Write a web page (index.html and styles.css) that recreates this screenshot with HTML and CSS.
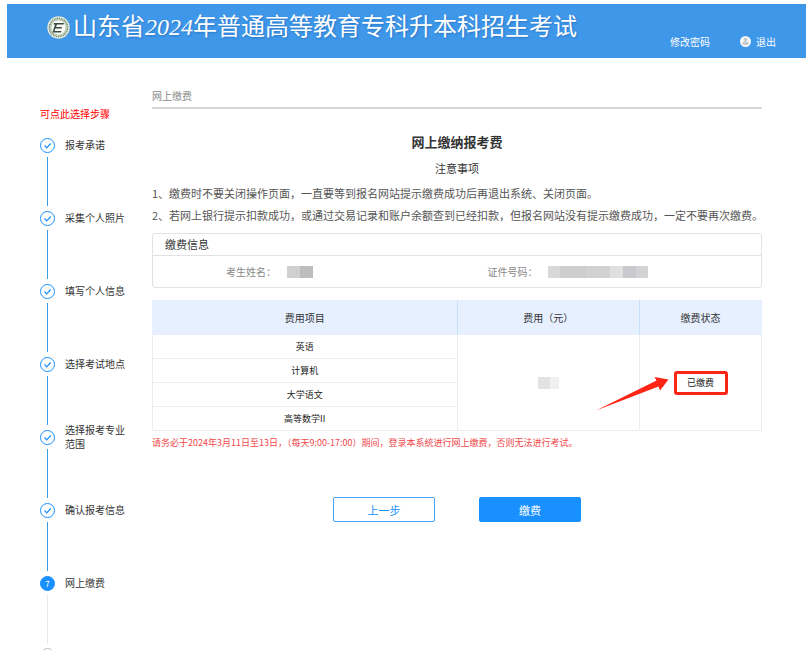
FILE: index.html
```
<!DOCTYPE html>
<html lang="zh-CN">
<head>
    <meta charset="UTF-8">
    <meta name="viewport" content="width=device-width, initial-scale=1.0">
    <title>网上缴费</title>
    <link rel="stylesheet" href="styles.css">
</head>
<body>
    <header class="header">
        <div class="brand">
            <svg class="logo" viewBox="0 0 46 46" aria-hidden="true">
                <circle cx="23" cy="23" r="22.5" fill="#c9d8c4"/>
                <circle cx="23" cy="23" r="20" fill="none" stroke="#f8faf3" stroke-width="3"/>
                <circle cx="23" cy="23" r="18.5" fill="none" stroke="#66806b" stroke-width="3" stroke-dasharray="2 1.5"/>
                <circle cx="23" cy="23" r="15" fill="#fbfbf5" stroke="#8fa48d" stroke-width="1"/>
                <path d="M17 14h17l-1 3H20l-2 5h12l-1 3H17l-2 5h14l-1 3H11l5-16h-3l1-3h3z" fill="#3b4a48"/>
            </svg>
            <span class="brand-name">山东省<em>2024</em>年普通高等教育专科升本科招生考试</span>
        </div>
        <nav class="user-nav">
            <a href="#">修改密码</a>
            <a href="#" class="logout">
                <svg class="user-icon" viewBox="0 0 22 22" aria-hidden="true">
                    <circle cx="11" cy="11" r="11" fill="#f4f5f6"/>
                    <circle cx="11" cy="7" r="3.5" fill="#c3c7cc"/>
                    <path d="M4.500 16c0-4 3-5 6.500-5s6.500 1 6.500 5c-4 2.500-9 2.500-13 0z" fill="#c3c7cc"/>
                </svg>
                退出
            </a>
        </nav>
    </header>

    <div class="main">
        <!-- Steps -->
        <aside class="sidebar">
            <p class="steps-tip">可点此选择步骤</p>
            <ol class="steps">
                <li class="step done">
                    <a href="#"><span class="step-icon"><svg viewBox="0 0 15 15"><path d="M4.500 7.500l2.200 2.300 4-4.300"/></svg></span><span class="step-label">报考承诺</span></a>
                </li>
                <li class="step done">
                    <a href="#"><span class="step-icon"><svg viewBox="0 0 15 15"><path d="M4.500 7.500l2.200 2.300 4-4.300"/></svg></span><span class="step-label">采集个人照片</span></a>
                </li>
                <li class="step done">
                    <a href="#"><span class="step-icon"><svg viewBox="0 0 15 15"><path d="M4.500 7.500l2.200 2.300 4-4.300"/></svg></span><span class="step-label">填写个人信息</span></a>
                </li>
                <li class="step done">
                    <a href="#"><span class="step-icon"><svg viewBox="0 0 15 15"><path d="M4.500 7.500l2.200 2.300 4-4.300"/></svg></span><span class="step-label">选择考试地点</span></a>
                </li>
                <li class="step done">
                    <a href="#"><span class="step-icon"><svg viewBox="0 0 15 15"><path d="M4.500 7.500l2.200 2.300 4-4.300"/></svg></span><span class="step-label">选择报考专业范围</span></a>
                </li>
                <li class="step done">
                    <a href="#"><span class="step-icon"><svg viewBox="0 0 15 15"><path d="M4.500 7.500l2.200 2.300 4-4.300"/></svg></span><span class="step-label">确认报考信息</span></a>
                </li>
                <li class="step current">
                    <a href="#"><span class="step-icon">7</span><span class="step-label">网上缴费</span></a>
                </li>
                <li class="step wait">
                    <span class="step-icon"></span>
                </li>
            </ol>
        </aside>

        <main class="content">
            <div class="crumb">网上缴费</div>

            <h1>网上缴纳报考费</h1>
            <h2>注意事项</h2>
            <div class="notice">
                <p>1、缴费时不要关闭操作页面，一直要等到报名网站提示缴费成功后再退出系统、关闭页面。</p>
                <p>2、若网上银行提示扣款成功，或通过交易记录和账户余额查到已经扣款，但报名网站没有提示缴费成功，一定不要再次缴费。</p>
            </div>

            <!-- Payment info -->
            <section class="panel">
                <h3>缴费信息</h3>
                <dl class="info">
                    <div class="info-item">
                        <dt>考生姓名：</dt>
                        <dd class="mask mask-name"></dd>
                    </div>
                    <div class="info-item">
                        <dt>证件号码：</dt>
                        <dd class="mask mask-id"></dd>
                    </div>
                </dl>
            </section>

            <table class="fees">
                <thead>
                    <tr>
                        <th class="col-item">费用项目</th>
                        <th class="col-fee">费用（元）</th>
                        <th class="col-status">缴费状态</th>
                    </tr>
                </thead>
                <tbody>
                    <tr>
                        <td>英语</td>
                        <td rowspan="4"><span class="mask mask-fee"></span></td>
                        <td rowspan="4">
                            <span class="status">
                                已缴费
                                <svg class="arrow" viewBox="0 0 73 34" aria-hidden="true">
                                    <path d="M0 33.500L60.500 3.500 58.500 0 72.500 2.500 64 13.500 62.500 9.500z" fill="#fe2416"/>
                                </svg>
                            </span>
                        </td>
                    </tr>
                    <tr><td>计算机</td></tr>
                    <tr><td>大学语文</td></tr>
                    <tr><td>高等数学II</td></tr>
                </tbody>
            </table>
            <p class="deadline">请务必于2024年3月11日至13日，（每天9:00-17:00）期间，登录本系统进行网上缴费，否则无法进行考试。</p>

            <div class="actions">
                <button type="button" class="btn">上一步</button>
                <button type="button" class="btn btn-primary">缴费</button>
            </div>
        </main>
    </div>
</body>
</html>
```
FILE: styles.css
```
* {
    box-sizing: border-box;
}
html,
body {
    height: 100%;
}
body {
    margin: 0;
    padding: 4px 0 0 7px;
    display: flex;
    flex-direction: column;
    overflow: hidden;
    background-color: #fff;
    color: #333;
    font-family: "Noto Sans CJK SC", sans-serif;
    font-size: 10px;
}
h1,
h2,
h3,
p,
dl,
dd,
ol {
    margin: 0;
    padding: 0;
}
a {
    color: inherit;
    text-decoration: none;
}

/* Header */
.header {
    display: flex;
    justify-content: space-between;
    flex-shrink: 0;
    height: 54px;
    padding: 0 30px 0 40px;
    background-color: #3e97e9;
    color: #fff;
}
.brand {
    display: flex;
    align-items: center;
    gap: 3px;
    height: 46px;
}
.logo {
    width: 23px;
    height: 23px;
}
.brand-name {
    font-family: "Liberation Serif", "Noto Sans CJK SC", serif;
    font-size: 24px;
    line-height: 30px;
    white-space: nowrap;
    text-shadow: 1px 1px 2px rgba(0, 50, 120, 0.3);
}
.user-nav {
    display: flex;
    align-items: center;
    align-self: flex-end;
    gap: 30px;
    height: 34px;
    white-space: nowrap;
}
.logout {
    display: flex;
    align-items: center;
    gap: 5px;
}
.user-icon {
    width: 11px;
    height: 11px;
}

.main {
    display: flex;
    flex: 1;
    min-height: 0;
    padding: 30px 44px 0 33px;
}

/* Steps */
.sidebar {
    width: 112px;
    flex-shrink: 0;
    padding-top: 18px;
}
.steps-tip {
    margin-bottom: 11px;
    color: #f00;
    line-height: 16px;
}
.steps {
    list-style: none;
}
.step a {
    display: flex;
    align-items: center;
    gap: 10px;
    height: 24px;
}
.step::after {
    content: "";
    display: block;
    width: 1px;
    height: 49px;
    margin-left: 7px;
    background-color: #3a9be0;
}
.step-icon {
    display: flex;
    align-items: center;
    justify-content: center;
    flex-shrink: 0;
    width: 15px;
    height: 15px;
    border: 1px solid #1890ff;
    border-radius: 50%;
    font-size: 8px;
}
.step-icon svg {
    width: 15px;
    height: 15px;
    flex-shrink: 0;
    fill: none;
    stroke: #1890ff;
    stroke-width: 1.2;
}
.step-label {
    width: 64px;
    line-height: 14px;
}
.current .step-icon {
    background-color: #1890ff;
    color: #fff;
}
.current::after {
    background-color: #e8e8e8;
}
.wait {
    padding-top: 4px;
}
.wait .step-icon {
    border-color: #bfbfbf;
}
.wait::after {
    display: none;
}

/* Content */
.content {
    flex: 1;
    min-width: 0;
}
.crumb {
    height: 21px;
    border-bottom: 2px solid #d6d6d6;
    color: #888;
    line-height: 16px;
}
h1 {
    margin-top: 23px;
    font-size: 13px;
    line-height: 20px;
    text-align: center;
}
h2 {
    margin: 5px 0 3px;
    font-size: 11px;
    font-weight: normal;
    line-height: 22px;
    text-align: center;
}
.notice {
    margin-bottom: 7px;
    color: #555;
    font-size: 11px;
    line-height: 22px;
    white-space: nowrap;
}
.panel {
    margin-bottom: 12px;
    border: 1px solid #e2e2e2;
    border-radius: 3px;
}
.panel h3 {
    padding-left: 12px;
    border-bottom: 1px solid #e2e2e2;
    font-size: 11px;
    font-weight: normal;
    line-height: 21px;
}
.info {
    display: grid;
    grid-template-columns: 43% 57%;
    height: 31px;
    align-items: center;
}
.info-item {
    display: flex;
    align-items: center;
    gap: 11px;
    padding-left: 73px;
    color: #888;
}
.mask {
    height: 12px;
}
.mask-name {
    width: 26px;
    background: linear-gradient(90deg, #d0d0d0 50%, #bdbdbd 50%);
}
.mask-id {
    width: 100px;
    background: linear-gradient(90deg, #d8d8d8 12%, #cdcdcd 12% 38%, #d2d2d2 38% 62%, #e0e0e0 62% 75%, #c8c9ce 75% 88%, #d3d3d5 88%);
}
.mask-fee {
    display: inline-block;
    width: 21px;
    vertical-align: middle;
    background: linear-gradient(90deg, #e3e3e3 58%, #f0f0f0 58%);
}

/* Fee table */
.fees {
    width: 100%;
    table-layout: fixed;
    border-collapse: collapse;
    text-align: center;
}
.fees th,
.fees td {
    padding: 0;
    border: 1px solid #ececec;
}
.fees th {
    height: 34px;
    border-color: #e6f0ff;
    background-color: #e6f0ff;
    font-weight: normal;
    line-height: 14px;
}
.fees .col-item,
.fees .col-fee {
    border-right-color: #c6e0f8;
}
.fees td {
    height: 24px;
    color: #222;
    font-size: 9px;
    line-height: 12px;
}
.col-item {
    width: 50%;
}
.col-fee {
    width: 30%;
}
.col-status {
    width: 20%;
}
.status {
    position: relative;
    display: inline-block;
    width: 54px;
    border: 3px solid #fe2416;
    border-radius: 3px;
    line-height: 18px;
}
.arrow {
    position: absolute;
    top: 3px;
    right: 56px;
    width: 73px;
    height: 34px;
}
.deadline {
    margin-top: 4px;
    color: #f0484a;
    font-size: 9px;
    line-height: 16px;
}

.actions {
    display: flex;
    justify-content: center;
    gap: 44px;
    margin-top: 46px;
}
.btn {
    width: 102px;
    height: 25px;
    padding: 0;
    border: 1px solid #4aa3f5;
    border-radius: 2px;
    background-color: #fff;
    color: #1890ff;
    font-family: inherit;
    font-size: 11px;
    cursor: pointer;
}
.btn-primary {
    border-color: #1890ff;
    background-color: #1890ff;
    color: #fff;
}
```
